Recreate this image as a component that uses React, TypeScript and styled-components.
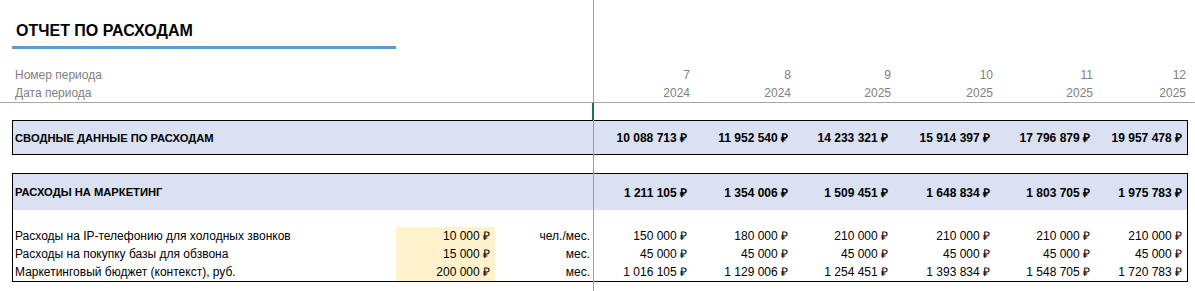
import { Fragment } from "react";
import styled, { createGlobalStyle } from "styled-components";

const GlobalStyle = createGlobalStyle`
  html, body {
    margin: 0;
    padding: 0;
    background: #ffffff;
  }
  body {
    font-family: "Liberation Sans", Arial, sans-serif;
    color: #000;
  }
`;

// widths of the sheet columns B..J (Excel-like)
const COLS = "384px 99px 98px 99px 101px 100px 102px 100px 93px";
const BOX_COLS = "383px 99px 98px 99px 101px 100px 102px 100px 92px";

const Sheet = styled.div`
  position: relative;
  width: 1195px;
  height: 291px;
  overflow: hidden;
`;

const Title = styled.div`
  padding: 22px 0 0 16px;
  height: 24px;
  line-height: 18px;
  font-size: 16px;
  font-weight: 700;
`;

const Underline = styled.div`
  margin-left: 12px;
  width: 384px;
  height: 3px;
  background: #5b9bd5;
`;

const HeaderGrid = styled.div`
  display: grid;
  grid-template-columns: 12px ${COLS};
  grid-auto-rows: 18px;
  margin-top: 17px;
  font-size: 12px;
  line-height: 18px;
  color: #808080;
`;

const HeaderLabel = styled.div`
  grid-column: 2 / 5;
  padding-left: 3px;
`;

const HeaderValue = styled.div`
  text-align: right;
  padding-right: 2px;
`;

const Spacer = styled.div<{ $h: number }>`
  height: ${(p) => p.$h}px;
`;

const SectionBox = styled.div`
  box-sizing: border-box;
  margin-left: 12px;
  width: 1176px;
  border: 1px solid #000;
`;

const Band = styled.div<{ $h: number }>`
  display: grid;
  grid-template-columns: ${BOX_COLS};
  align-items: center;
  height: ${(p) => p.$h}px;
  background: #d9e1f2;
  font-weight: 700;
`;

const BandTitle = styled.div`
  grid-column: 1 / 4;
  padding-left: 2px;
  font-size: 11.2px;
`;

const BandValue = styled.div`
  text-align: right;
  padding-right: 5px;
  font-size: 12px;
`;

const DetailGrid = styled.div`
  display: grid;
  grid-template-columns: ${BOX_COLS};
  grid-auto-rows: 18px;
  font-size: 12px;
  line-height: 18px;
`;

const Label = styled.div`
  padding-left: 2px;
  white-space: nowrap;
`;

const InputCell = styled.div`
  background: #fff2cc;
  text-align: right;
  padding-right: 5px;
`;

const Unit = styled.div`
  text-align: right;
  padding-right: 3px;
`;

const Value = styled.div`
  text-align: right;
  padding-right: 5px;
`;

const FrozenV = styled.div`
  position: absolute;
  left: 593px;
  top: 0;
  bottom: 0;
  width: 1px;
  background: #9e9e9e;
`;

const FrozenH = styled.div`
  position: absolute;
  top: 102px;
  left: 0;
  right: 0;
  height: 1px;
  background: #a6a6a6;
`;

const Cursor = styled.div`
  position: absolute;
  left: 592px;
  top: 103px;
  width: 2px;
  height: 17px;
  background: #217346;
`;

const periods = [7, 8, 9, 10, 11, 12];
const years = [2024, 2024, 2025, 2025, 2025, 2025];

const summary = [
  "10 088 713 ₽",
  "11 952 540 ₽",
  "14 233 321 ₽",
  "15 914 397 ₽",
  "17 796 879 ₽",
  "19 957 478 ₽",
];

const marketing = [
  "1 211 105 ₽",
  "1 354 006 ₽",
  "1 509 451 ₽",
  "1 648 834 ₽",
  "1 803 705 ₽",
  "1 975 783 ₽",
];

const rows = [
  {
    label: "Расходы на IP-телефонию для холодных звонков",
    input: "10 000 ₽",
    unit: "чел./мес.",
    values: ["150 000 ₽", "180 000 ₽", "210 000 ₽", "210 000 ₽", "210 000 ₽", "210 000 ₽"],
  },
  {
    label: "Расходы на покупку базы для обзвона",
    input: "15 000 ₽",
    unit: "мес.",
    values: ["45 000 ₽", "45 000 ₽", "45 000 ₽", "45 000 ₽", "45 000 ₽", "45 000 ₽"],
  },
  {
    label: "Маркетинговый бюджет (контекст), руб.",
    input: "200 000 ₽",
    unit: "мес.",
    values: ["1 016 105 ₽", "1 129 006 ₽", "1 254 451 ₽", "1 393 834 ₽", "1 548 705 ₽", "1 720 783 ₽"],
  },
];

const App = () => {
  return (
    <Sheet>
      <GlobalStyle />
      <Title>ОТЧЕТ ПО РАСХОДАМ</Title>
      <Underline />

      <HeaderGrid>
        <HeaderLabel>Номер периода</HeaderLabel>
        {periods.map((p) => (
          <HeaderValue key={p}>{p}</HeaderValue>
        ))}
        <HeaderLabel>Дата периода</HeaderLabel>
        {years.map((y, i) => (
          <HeaderValue key={i}>{y}</HeaderValue>
        ))}
      </HeaderGrid>

      <Spacer $h={18} />

      <SectionBox>
        <Band $h={33}>
          <BandTitle>СВОДНЫЕ ДАННЫЕ ПО РАСХОДАМ</BandTitle>
          {summary.map((v, i) => (
            <BandValue key={i}>{v}</BandValue>
          ))}
        </Band>
      </SectionBox>

      <Spacer $h={18} />

      <SectionBox>
        <Band $h={36}>
          <BandTitle>РАСХОДЫ НА МАРКЕТИНГ</BandTitle>
          {marketing.map((v, i) => (
            <BandValue key={i}>{v}</BandValue>
          ))}
        </Band>
        <Spacer $h={17} />
        <DetailGrid>
          {rows.map((r) => (
            <Fragment key={r.label}>
              <Label>{r.label}</Label>
              <InputCell>{r.input}</InputCell>
              <Unit>{r.unit}</Unit>
              {r.values.map((v, i) => (
                <Value key={i}>{v}</Value>
              ))}
            </Fragment>
          ))}
        </DetailGrid>
      </SectionBox>

      <FrozenH />
      <FrozenV />
      <Cursor />
    </Sheet>
  );
};

export default App;
